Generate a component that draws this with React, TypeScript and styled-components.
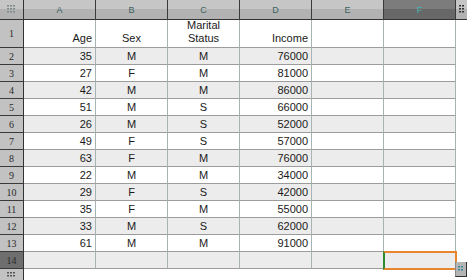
import React from 'react';
import styled, { createGlobalStyle } from 'styled-components';

const GlobalStyle = createGlobalStyle`
  html, body {
    margin: 0;
    padding: 0;
    background: #ffffff;
    font-family: 'Liberation Sans', Arial, sans-serif;
  }
`;

const Frame = styled.div`
  position: relative;
  width: 467px;
  height: 280px;
  overflow: hidden;
`;

const Sheet = styled.div`
  display: grid;
  grid-template-columns: 24px repeat(6, 72px) 11px;
  grid-template-rows: 20px 28px repeat(13, 17px) 11px;
  width: 467px;
  height: 280px;
  background: #fff;
`;

const Corner = styled.div`
  background: linear-gradient(#c6c6c6 50%, #b2b2b2 50%);
  border-right: 1px solid #333;
  border-bottom: 1px solid #333;
  box-sizing: border-box;
  display: flex;
  align-items: center;
  justify-content: center;
`;

const ColHead = styled.div<{ selected?: boolean }>`
  background: ${({ selected }) =>
    selected ? 'linear-gradient(#7c7c7c 50%, #686868 50%)' : 'linear-gradient(#c6c6c6 50%, #b2b2b2 50%)'};
  border-right: 1px solid #3a3a3a;
  border-bottom: 1px solid #333;
  box-sizing: border-box;
  color: ${({ selected }) => (selected ? '#3fb8b8' : '#3a6262')};
  font-size: 9px;
  display: flex;
  justify-content: center;
  padding-top: 5px;
`;

const RowHead = styled.div<{ selected?: boolean }>`
  background: ${({ selected }) => (selected ? '#6e6e6e' : '#c2c2c2')};
  border-right: 1px solid #333;
  border-bottom: 1px solid #3a3a3a;
  box-sizing: border-box;
  color: #2a2a2a;
  font-family: 'Liberation Serif', serif;
  font-size: 10px;
  display: flex;
  align-items: center;
  justify-content: center;
`;

const Cell = styled.div<{ striped?: boolean; align?: string; tall?: boolean }>`
  background: ${({ striped }) => (striped ? '#ececec' : '#fff')};
  border-right: 1px solid #a8b4b4;
  border-bottom: 1px solid #9c9c9c;
  box-sizing: border-box;
  color: #1a1a1a;
  font-size: 11px;
  line-height: 13px;
  display: flex;
  align-items: ${({ tall }) => (tall ? 'flex-end' : 'center')};
  justify-content: ${({ align }) => (align === 'right' ? 'flex-end' : 'center')};
  text-align: ${({ align }) => (align === 'right' ? 'right' : 'center')};
  padding: ${({ tall }) => (tall ? '0 3px 2px 3px' : '0 3px')};
  white-space: pre-line;
`;

const Edge = styled.div<{ top?: boolean }>`
  background: ${({ top }) => (top ? 'linear-gradient(#c6c6c6 50%, #b2b2b2 50%)' : '#fff')};
  border-bottom: ${({ top }) => (top ? '1px solid #333' : 'none')};
  box-sizing: border-box;
  display: flex;
  align-items: center;
  justify-content: center;
`;

const Grip = styled.div`
  background: #c2c2c2;
  border-right: 1px solid #333;
  box-sizing: border-box;
  display: flex;
  align-items: center;
  justify-content: center;
`;

const Blank = styled.div``;

const SelectedBox = styled.div`
  position: absolute;
  left: 383px;
  top: 251px;
  width: 74px;
  height: 19px;
  box-sizing: border-box;
  border: 2px solid #e8862e;
  border-left: 2px solid #2e8a2e;
`;

const Handle = styled.div`
  position: absolute;
  left: 455px;
  top: 262px;
  width: 12px;
  height: 15px;
  box-sizing: border-box;
  background: #b4b4b4;
  border-left: 1px solid #888;
  border-right: 1px solid #333;
  border-bottom: 1px solid #333;
  display: flex;
  align-items: center;
  justify-content: center;
`;

const Dots = ({ cols, rows, color }: { cols: number; rows: number; color: string }) => (
  <svg width={cols * 3} height={rows * 3} viewBox={`0 0 ${cols * 3} ${rows * 3}`}>
    {Array.from({ length: cols * rows }).map((_, i) => (
      <rect key={i} x={(i % cols) * 3} y={Math.floor(i / cols) * 3} width="2" height="1.5" fill={color} />
    ))}
  </svg>
);

const data: [string, string, string, string][] = [
  ['35', 'M', 'M', '76000'],
  ['27', 'F', 'M', '81000'],
  ['42', 'M', 'M', '86000'],
  ['51', 'M', 'S', '66000'],
  ['26', 'M', 'S', '52000'],
  ['49', 'F', 'S', '57000'],
  ['63', 'F', 'M', '76000'],
  ['22', 'M', 'M', '34000'],
  ['29', 'F', 'S', '42000'],
  ['35', 'F', 'M', '55000'],
  ['33', 'M', 'S', '62000'],
  ['61', 'M', 'M', '91000'],
];

const letters = ['A', 'B', 'C', 'D', 'E', 'F'];

export default function App() {
  return (
    <>
      <GlobalStyle />
      <Frame>
        <Sheet>
          <Corner>
            <Dots cols={3} rows={3} color="#7a8a8a" />
          </Corner>
          {letters.map((l) => (
            <ColHead key={l} selected={l === 'F'}>
              {l}
            </ColHead>
          ))}
          <Edge top>
            <Dots cols={2} rows={3} color="#333" />
          </Edge>

          <RowHead>1</RowHead>
          <Cell tall align="right">Age</Cell>
          <Cell tall>Sex</Cell>
          <Cell tall>{'Marital\nStatus'}</Cell>
          <Cell tall align="right">Income</Cell>
          <Cell tall />
          <Cell tall />
          <Edge />

          {data.map((row, i) => {
            const striped = i % 2 === 0;
            return (
              <React.Fragment key={i}>
                <RowHead>{i + 2}</RowHead>
                <Cell striped={striped} align="right">{row[0]}</Cell>
                <Cell striped={striped}>{row[1]}</Cell>
                <Cell striped={striped}>{row[2]}</Cell>
                <Cell striped={striped} align="right">{row[3]}</Cell>
                <Cell striped={striped} />
                <Cell striped={striped} />
                <Edge />
              </React.Fragment>
            );
          })}

          <RowHead selected>14</RowHead>
          {letters.map((l) => (
            <Cell key={l} striped />
          ))}
          <Edge />

          <Grip>
            <Dots cols={3} rows={2} color="#555" />
          </Grip>
          {letters.map((l) => (
            <Blank key={l} />
          ))}
          <Blank />
        </Sheet>
        <SelectedBox />
        <Handle>
          <Dots cols={2} rows={2} color="#3a8a9a" />
        </Handle>
      </Frame>
    </>
  );
}
